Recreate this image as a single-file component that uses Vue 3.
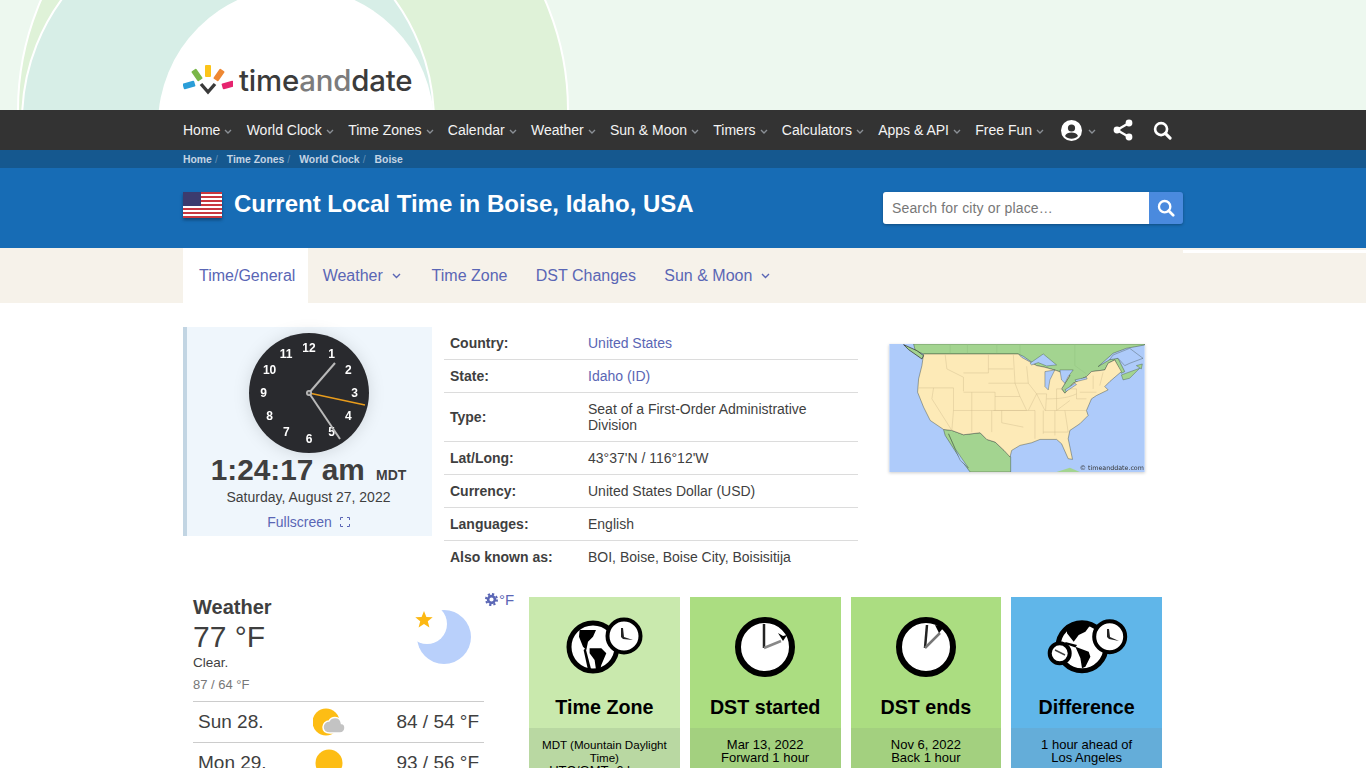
<template>
  <div class="page">
    <header class="top">
      <svg class="backdrop" width="1366" height="110" viewBox="0 0 1366 110">
        <circle cx="293" cy="110" r="275" fill="#dff2d8" stroke="#fff" stroke-width="2" />
        <circle cx="228" cy="121" r="206" fill="#d7eee7" stroke="#fff" stroke-width="2" />
        <circle cx="296" cy="125" r="138" fill="#fff" />
      </svg>
      <div class="wrap logo">
        <svg width="50" height="32" viewBox="0 0 50 32">
          <rect x="0" y="18" width="12" height="6" rx="1" fill="#2b9ed8" transform="rotate(-16 6 21)" />
          <rect x="11" y="5" width="6" height="12" rx="1" fill="#7ab648" transform="rotate(-35 14 11)" />
          <rect x="22" y="1" width="6" height="12" rx="1" fill="#fcc419" />
          <rect x="33" y="5" width="6" height="12" rx="1" fill="#ee8833" transform="rotate(35 36 11)" />
          <rect x="39" y="18" width="12" height="6" rx="1" fill="#e6246f" transform="rotate(-16 45 21)" />
          <path d="M18 20l7 8 7-8" fill="none" stroke="#3a3a3a" stroke-width="3.4" />
        </svg>
        <span class="logo-text">time<span class="and">and</span>date</span>
      </div>
    </header>

    <nav class="nav">
      <div class="wrap nav-row">
        <a v-for="item in navItems" :key="item" class="nav-item">
          {{ item }}
          <svg class="chev" width="8" height="5" viewBox="0 0 8 5"><path d="M1 1l3 3 3-3" fill="none" stroke="#8b9096" stroke-width="1.4" /></svg>
        </a>
        <a class="nav-item user">
          <svg width="21" height="21" viewBox="0 0 21 21">
            <circle cx="10.5" cy="10.5" r="10.5" fill="#fff" />
            <circle cx="10.5" cy="8" r="3.6" fill="#333" />
            <path d="M4 16c1.2-3 3.600-3.600 6.500-3.600s5.300.6 6.500 3.600c-1.700 1.800-3.900 2.800-6.500 2.800S5.700 17.800 4 16z" fill="#333" />
          </svg>
          <svg class="chev" width="8" height="5" viewBox="0 0 8 5"><path d="M1 1l3 3 3-3" fill="none" stroke="#8b9096" stroke-width="1.4" /></svg>
        </a>
        <svg class="share" width="22" height="22" viewBox="0 0 22 22">
          <path d="M17 4L5 11l12 7" fill="none" stroke="#fff" stroke-width="2.400" />
          <circle cx="17" cy="4" r="3.400" fill="#fff" />
          <circle cx="5" cy="11" r="3.400" fill="#fff" />
          <circle cx="17" cy="18" r="3.400" fill="#fff" />
        </svg>
        <svg class="nav-search" width="19" height="19" viewBox="0 0 20 20">
          <circle cx="8.500" cy="8.500" r="6.300" fill="none" stroke="#fff" stroke-width="2.800" />
          <path d="M13 13l5 5" stroke="#fff" stroke-width="3.200" stroke-linecap="round" />
        </svg>
      </div>
    </nav>

    <div class="crumbs">
      <div class="wrap crumb-row">
        <span v-for="(c, i) in crumbs" :key="c" class="crumb">{{ c }}<i v-if="i < crumbs.length - 1">/</i></span>
      </div>
    </div>

    <section class="banner">
      <div class="wrap banner-row">
        <svg class="flag" width="39" height="26" viewBox="0 0 39 26">
          <rect width="39" height="26" fill="#fff" />
          <rect v-for="n in 7" :key="n" x="0" :y="(n - 1) * 4" width="39" height="2" fill="#c8373f" />
          <rect width="18" height="14" fill="#3c3b6e" />
        </svg>
        <h1>Current Local Time in Boise, Idaho, USA</h1>
        <div class="search">
          <input type="text" placeholder="Search for city or place…" />
          <button>
            <svg width="18" height="18" viewBox="0 0 20 20">
              <circle cx="8.500" cy="8.500" r="6.300" fill="none" stroke="#fff" stroke-width="2.600" />
              <path d="M13 13l5 5" stroke="#fff" stroke-width="3" stroke-linecap="round" />
            </svg>
          </button>
        </div>
      </div>
    </section>

    <div class="tabs">
      <div class="wrap tab-row">
        <a v-for="tab in tabs" :key="tab.label" class="tab" :class="{ active: tab.active }">
          {{ tab.label }}
          <svg v-if="tab.menu" class="tab-chev" width="9" height="6" viewBox="0 0 9 6"><path d="M1 1l3.500 3.500L8 1" fill="none" stroke="#5a66b5" stroke-width="1.400" /></svg>
        </a>
      </div>
      <div class="strip"></div>
    </div>

    <main class="wrap">
      <div class="info-row">
        <div class="clock-box">
          <svg class="clock" width="120" height="120" viewBox="-60 -60 120 120">
            <circle r="60" fill="#292a2e" />
            <text v-for="n in 12" :key="n" class="num" :x="numX(n)" :y="numY(n)" text-anchor="middle" dominant-baseline="central">{{ n }}</text>
            <path d="M0 0L26 -30" stroke="#b9b9b9" stroke-width="2" />
            <path d="M0 0L31 46" stroke="#b9b9b9" stroke-width="2" />
            <path d="M0 0L56 12" stroke="#e89c1c" stroke-width="1.300" />
            <circle r="3" fill="#b9b9b9" />
            <circle r="1.300" fill="#555" />
          </svg>
          <div class="time">1:24:17 am <span>MDT</span></div>
          <div class="date">Saturday, August 27, 2022</div>
          <a class="fullscreen">Fullscreen
            <svg width="10" height="10" viewBox="0 0 10 10"><path d="M.5 3V.5H3M7 .5h2.500V3M9.500 7v2.500H7M3 9.500H.5V7" fill="none" stroke="#5a66b5" /></svg>
          </a>
        </div>

        <table class="facts">
          <tbody>
            <tr v-for="row in facts" :key="row.label">
              <th>{{ row.label }}</th>
              <td :class="{ link: row.link }">{{ row.value }}</td>
            </tr>
          </tbody>
        </table>

        <svg class="map" width="256" height="128" viewBox="27 25 768 385">
          <rect x="27" y="25" width="768" height="385" fill="#aecbfa" />
          <!-- Canada -->
          <path d="M100 25H795V28L740 38 700 53 655 93 690 72 715 68 735 108 725 113 705 73 685 83 675 103 635 108 620 123 580 143 555 173 545 160 570 120 530 105 495 95 470 90 430 62 415 55H130L105 45Z" fill="#a3d490" stroke="#2d3b2d" stroke-width="1.200" />
          <path d="M210 25V55M262 25V55M350 25V55M420 25V62M585 25V90L620 115" fill="none" stroke="#8fc07f" stroke-width="1.200" />
          <path d="M725 118L780 98 750 128 730 133Z" fill="#a3d490" stroke="#2d3b2d" stroke-width="1" />
          <path d="M770 90L788 85 785 100Z" fill="#a3d490" stroke="#2d3b2d" stroke-width="1" />
          <!-- Mexico and Cuba -->
          <path d="M190 282L215 285 250 298 300 292 320 312 345 320 372 345 392 365 392 410H270L240 370 195 300Z" fill="#a3d490" stroke="#2d3b2d" stroke-width="1.200" />
          <path d="M530 410L570 397 600 410Z" fill="#a3d490" />
          <!-- USA -->
          <path d="M130 55H415L425 65 470 90 495 95 530 105 570 120 545 160 555 173 580 143 620 123 635 108 675 103 685 83 705 73 725 108 690 138 675 153 685 163 650 180 635 190 620 225 625 240 600 265 570 285 565 310 578 372 565 370 545 325 530 312 480 312 455 322 420 330 395 345 390 365 372 345 345 320 320 312 300 292 250 298 215 285 190 282 150 255 130 215 112 170 115 130 125 90Z" fill="#fdeab7" stroke="#2d3b2d" stroke-width="1.200" />
          <g fill="none" stroke="#cdb98a" stroke-width="1.200">
            <path d="M115 157H160L155 190 215 285" />
            <path d="M195 57L200 100 250 125V167" />
            <path d="M160 157H220V225L215 285M220 225H345V170H250" />
            <path d="M275 170V225M275 225V290M335 225V290" />
            <path d="M250 112H325V57M325 100H400M325 143H420M345 183H420L440 225H345" />
            <path d="M400 57L405 143 420 183M340 225H465V310M365 225V262L430 275" />
            <path d="M440 92L445 143 420 143M445 143L470 175 445 225M470 175L495 225H620" />
            <path d="M470 175H500L497 225M530 160V225M530 160H590V190L620 190" />
            <path d="M490 225V295M525 225V300M555 225L565 290H490M570 195L530 225" />
            <path d="M600 170H650M640 120V160M670 110L660 150" />
            <path d="M500 190C520 190 560 190 590 175" />
          </g>
          <!-- Great Lakes and the Gulf of St Lawrence -->
          <g fill="#aecbfa" stroke="#2d3b2d" stroke-width="1">
            <path d="M450 83L490 55 530 88 500 91 475 81 455 88Z" />
            <path d="M495 108L525 103 510 133 505 163 495 153Z" />
            <path d="M540 103H580L565 123 555 143 545 133Z" />
            <path d="M555 163L585 143 590 147 560 167Z" />
            <path d="M585 133L620 125 622 130 590 138Z" />
            <path d="M700 58L750 38 790 68 750 83 735 90 715 68 690 72Z" />
          </g>
          <path d="M205 295L240 375 265 398 225 340Z" fill="#aecbfa" stroke="#2d3b2d" stroke-width="1" />
          <path d="M70 27L110 45 130 60 125 70 85 42Z" fill="#a3d490" stroke="#222" stroke-width="2" />
          <text x="600" y="405" class="map-note">© timeanddate.com</text>
        </svg>
      </div>

      <div class="lower">
        <div class="weather">
          <div class="wx-now">
            <div>
              <div class="wx-title">Weather</div>
              <div class="wx-temp">77 °F</div>
              <div class="wx-desc">Clear.</div>
              <div class="wx-range">87 / 64 °F</div>
            </div>
            <svg class="moon" width="60" height="64" viewBox="0 0 60 64">
              <circle cx="33" cy="37" r="27" fill="#b9d0fb" />
              <circle cx="16" cy="24" r="20" fill="#fff" />
              <path d="M13 11l2.400 5.900 6.300.4-4.900 4 1.600 6.200L13 24.100l-5.400 3.400 1.600-6.200-4.900-4 6.300-.4z" fill="#fcb813" />
            </svg>
            <a class="unit">
              <svg width="13" height="13" viewBox="0 0 13 13">
                <circle cx="6.500" cy="6.500" r="3.400" fill="none" stroke="#5a66b5" stroke-width="2.600" />
                <circle cx="6.500" cy="6.500" r="5.500" fill="none" stroke="#5a66b5" stroke-width="2" stroke-dasharray="2.200 2.100" />
              </svg>°F
            </a>
          </div>
          <div v-for="day in forecast" :key="day.name" class="fc-row">
            <span class="fc-day">{{ day.name }}</span>
            <svg class="fc-icon" width="34" height="28" viewBox="0 0 34 28">
              <circle :cx="day.cloudy ? 13 : 16" cy="14" r="13.500" fill="#fdbd14" />
              <path v-if="day.cloudy" d="M17 25c-4 0-7-2-7-6 0-3.500 3-6 6-6 1-2 3.500-3.500 6-3.500 3.500 0 6 2.500 6.500 6 2.500 0 3.500 2 3.500 4.500s-2 5-5 5z" fill="#c3c3c3" stroke="#fff" stroke-width="1.500" />
            </svg>
            <span class="fc-temp">{{ day.temps }}</span>
          </div>
        </div>

        <div class="cards">
          <div v-for="card in cards" :key="card.title" class="card" :class="card.tone">
            <div class="card-top">
              <svg class="card-icon" width="90" height="66" viewBox="0 0 90 66">
                <g v-if="card.icon === 'zone'">
                  <circle cx="34" cy="33" r="24" fill="#fff" stroke="#000" stroke-width="5" />
                  <path d="M20.600 16H37L34 22.700 29 27.700 27.300 36 24 32.700 20 22.700Z" fill="#000" />
                  <path d="M26.600 34.300L32.300 56H29L24.600 36Z" fill="#000" />
                  <path d="M30.600 34.300H42.300L47.300 39.300 42.300 51 40.600 57.700H37.300L35.600 46 30.600 39.300Z" fill="#000" />
                  <circle cx="65" cy="22" r="16.500" fill="#fff" stroke="#000" stroke-width="4" />
                  <path d="M62 14H64L65 23 74 26 64 25 62 23Z" fill="#222" />
                </g>
                <g v-else-if="card.icon === 'start'">
                  <circle cx="45" cy="33" r="27" fill="#fff" stroke="#000" stroke-width="6" />
                  <path d="M44 10v24" stroke="#222" stroke-width="2.500" />
                  <path d="M44 34l17-7" stroke="#888" stroke-width="2.500" />
                  <path d="M58 19l5 8 4-6-4 1z" fill="#000" />
                </g>
                <g v-else-if="card.icon === 'end'">
                  <circle cx="45" cy="33" r="27" fill="#fff" stroke="#000" stroke-width="6" />
                  <path d="M44 34l2-23" stroke="#222" stroke-width="2.500" />
                  <path d="M44 34l15-15" stroke="#777" stroke-width="2.500" />
                  <path d="M54 11l9 2-5 6z" fill="#000" />
                </g>
                <g v-else>
                  <circle cx="40" cy="32.700" r="24" fill="#fff" stroke="#000" stroke-width="5" />
                  <path d="M25 11H48.400L43.400 17.700 36.700 21 31.700 27.700 25 19.300Z" fill="#000" />
                  <path d="M23.400 28L35 31 33.400 33.500 23.400 30Z" fill="#000" />
                  <path d="M33.400 32.700L46.700 37.700 48.400 42.700 43.400 52.700 40 54.300 38.400 44.300Z" fill="#000" />
                  <circle cx="67.700" cy="22.700" r="15.500" fill="#fff" stroke="#000" stroke-width="4" />
                  <path d="M65 15H67L68 23 77 27 67 25 65 23Z" fill="#222" />
                  <circle cx="17.700" cy="39.300" r="10" fill="#fff" stroke="#000" stroke-width="4" />
                  <path d="M13 36L18 38.500 23 41" fill="none" stroke="#444" stroke-width="1.500" />
                </g>
              </svg>
              <h3>{{ card.title }}</h3>
            </div>
            <div class="card-body">
              <div v-for="(line, i) in card.lines" :key="line" :class="{ small: card.small && i === 0 }">{{ line }}</div>
            </div>
          </div>
        </div>
      </div>
    </main>
  </div>
</template>

<script setup>
const navItems = ['Home', 'World Clock', 'Time Zones', 'Calendar', 'Weather', 'Sun & Moon', 'Timers', 'Calculators', 'Apps & API', 'Free Fun']
const crumbs = ['Home', 'Time Zones', 'World Clock', 'Boise']

const tabs = [
  { label: 'Time/General', active: true },
  { label: 'Weather', menu: true },
  { label: 'Time Zone' },
  { label: 'DST Changes' },
  { label: 'Sun & Moon', menu: true }
]

const facts = [
  { label: 'Country:', value: 'United States', link: true },
  { label: 'State:', value: 'Idaho (ID)', link: true },
  { label: 'Type:', value: 'Seat of a First-Order Administrative Division' },
  { label: 'Lat/Long:', value: '43°37\'N / 116°12\'W' },
  { label: 'Currency:', value: 'United States Dollar (USD)' },
  { label: 'Languages:', value: 'English' },
  { label: 'Also known as:', value: 'BOI, Boise, Boise City, Boisisitija' }
]

const forecast = [
  { name: 'Sun 28.', temps: '84 / 54 °F', cloudy: true },
  { name: 'Mon 29.', temps: '93 / 56 °F', cloudy: false }
]

const cards = [
  { title: 'Time Zone', icon: 'zone', tone: 'pale', small: true, lines: ['MDT (Mountain Daylight Time)', 'UTC/GMT -6 hours'] },
  { title: 'DST started', icon: 'start', tone: 'green', lines: ['Mar 13, 2022', 'Forward 1 hour'] },
  { title: 'DST ends', icon: 'end', tone: 'green', lines: ['Nov 6, 2022', 'Back 1 hour'] },
  { title: 'Difference', icon: 'diff', tone: 'blue', lines: ['1 hour ahead of', 'Los Angeles'] }
]

const numX = (n) => (45.5 * Math.sin((n * Math.PI) / 6)).toFixed(1)
const numY = (n) => (-45.5 * Math.cos((n * Math.PI) / 6)).toFixed(1)
</script>

<style>
html, body {
  margin: 0;
  background: #fff;
  overflow: hidden;
}
</style>

<style scoped>
.page {
  height: 768px;
  overflow: hidden;
  font-family: "Liberation Sans", Arial, sans-serif;
  color: #3f3f3f;
  font-size: 14px;
}

.wrap {
  width: 1000px;
  margin: 0 auto;
}

.top {
  height: 110px;
  background: #edf8ef;
  position: relative;
  overflow: hidden;
}

.backdrop {
  position: absolute;
  left: 0;
  top: 0;
}

.logo {
  position: relative;
  display: flex;
  align-items: center;
  gap: 6px;
  height: 110px;
  padding-top: 50px;
  box-sizing: border-box;
}

.logo-text {
  font-family: Inter, "Liberation Sans", sans-serif;
  font-size: 29.400px;
  font-weight: 500;
  letter-spacing: -0.2px;
  color: #3b3b3b;
}

.and {
  color: #7c7c7c;
}

.nav {
  height: 40px;
  background: #333;
}

.nav-row {
  display: flex;
  align-items: center;
  height: 40px;
  gap: 14.300px;
}

.nav-item {
  display: flex;
  align-items: center;
  gap: 4px;
  color: #f4f4f4;
  white-space: nowrap;
}

.user {
  margin-left: 3px;
  gap: 6px;
}

.share {
  margin-left: 1.500px;
}

.nav-search {
  margin-left: 4px;
}

.chev {
  margin-top: 2px;
}

.crumbs {
  height: 18px;
  background: #15588f;
}

.crumb-row {
  display: flex;
  height: 18px;
  align-items: center;
  gap: 9px;
  font-size: 10.400px;
  font-weight: bold;
  color: #c4d4e4;
}

.crumb i {
  font-style: normal;
  font-weight: normal;
  color: #5f8db5;
  margin-left: 3px;
}

.banner {
  height: 80px;
  background: #176cb5;
}

.banner-row {
  display: flex;
  align-items: flex-start;
  padding-top: 24px;
}

.flag {
  box-shadow: 0 2px 3px rgba(0, 0, 0, 0.35);
}

h1 {
  margin: -3px 0 0 12px;
  font-size: 24px;
  line-height: 30px;
  color: #fff;
  flex: 1;
}

.search {
  display: flex;
  box-shadow: 0 1px 3px rgba(0, 0, 0, 0.3);
  border-radius: 3px;
}

.search input {
  width: 266px;
  height: 32px;
  box-sizing: border-box;
  border: 0;
  border-radius: 3px 0 0 3px;
  padding: 0 9px;
  font: 14px "Liberation Sans", Arial, sans-serif;
  letter-spacing: 0.15px;
  background: #fff;
  outline: none;
}

.search input::placeholder {
  color: #777;
}

.search button {
  width: 34px;
  height: 32px;
  border: 0;
  padding: 0;
  background: #4a8ade;
  border-radius: 0 3px 3px 0;
  display: flex;
  align-items: center;
  justify-content: center;
}

.tabs {
  height: 55px;
  background: #f6f2ea;
  position: relative;
}

.strip {
  position: absolute;
  left: 1183px;
  right: 0;
  top: 2px;
  height: 3px;
  background: #fff;
}

.tab-row {
  display: flex;
  height: 55px;
}

.tab {
  display: flex;
  align-items: center;
  gap: 7px;
  padding: 0 14px;
  font-size: 16px;
  color: #5a66b5;
  white-space: nowrap;
}

.tab.active {
  background: #fff;
  padding: 0 13px 0 16px;
}

.tab + .tab {
  margin-left: 0.300px;
}

.tab-chev {
  margin: 0 2.500px 0 2px;
}

.info-row {
  display: flex;
  align-items: flex-start;
  padding-top: 24px;
}

.clock-box {
  width: 249px;
  height: 209px;
  box-sizing: border-box;
  background: #eff6fc;
  border-left: 4px solid #c2d5e3;
  text-align: center;
  padding-top: 6px;
  padding-right: 2px;
}

.clock {
  display: block;
  margin: 0 auto;
  filter: drop-shadow(0 1px 8px rgba(0, 0, 0, 0.12));
}

.num {
  fill: #fff;
  font-size: 12px;
  font-weight: bold;
}

.time {
  font-size: 29.800px;
  font-weight: bold;
  line-height: 36px;
  margin-top: -1px;
  white-space: nowrap;
}

.time span {
  font-size: 14px;
  margin-left: 3px;
}

.date {
  line-height: 20px;
  margin-top: -6px;
}

.fullscreen {
  display: block;
  margin-top: 5px;
  line-height: 20px;
  color: #5a66b5;
}

.fullscreen svg {
  margin-left: 4px;
}

.facts {
  width: 414px;
  margin-left: 12px;
  border-collapse: collapse;
  line-height: 16px;
}

.facts tr {
  border-bottom: 1px solid #dcdcdc;
}

.facts tr:last-child {
  border-bottom: 0;
}

.facts th,
.facts td {
  padding: 8px 6px 8px 6px;
  text-align: left;
  vertical-align: middle;
}

.facts th {
  width: 126px;
  font-weight: bold;
}

.link {
  color: #5a66b5;
}

.map {
  margin: 17px 0 0 31px;
  box-shadow: 0 1px 3px rgba(0, 0, 0, 0.2);
  filter: blur(0.35px);
}

.map-note {
  font: 19px "DejaVu Sans", sans-serif;
  fill: #333;
}

.lower {
  display: flex;
  margin-top: 24px;
}

.weather {
  width: 331px;
  flex: none;
  padding-left: 10px;
  box-sizing: border-box;
}

.wx-now {
  position: relative;
  display: flex;
  justify-content: space-between;
  height: 104px;
  border-bottom: 1px solid #ccc;
  width: 291px;
}

.wx-title {
  font-size: 20px;
  font-weight: bold;
  line-height: 20px;
}

.wx-temp {
  font-size: 30px;
  line-height: 37px;
  margin-top: 1px;
}

.wx-desc {
  font-size: 13.500px;
  line-height: 16px;
}

.wx-range {
  font-size: 13px;
  line-height: 20px;
  margin-top: 4px;
  color: #777;
}

.moon {
  position: absolute;
  left: 218px;
  top: 3px;
}

.unit {
  position: absolute;
  left: 292px;
  top: -6px;
  color: #5a66b5;
  font-size: 15px;
  white-space: nowrap;
  display: flex;
  align-items: center;
  gap: 1px;
}

.fc-row {
  display: flex;
  align-items: center;
  width: 281px;
  height: 40px;
  border-bottom: 1px solid #ccc;
  font-size: 19px;
  padding: 0 5px;
}

.fc-day {
  width: 115px;
}

.fc-icon {
  flex: none;
}

.fc-temp {
  margin-left: auto;
}

.cards {
  display: flex;
  gap: 10px;
  margin-left: 15px;
}

.card {
  width: 150.750px;
  height: 220px;
  text-align: center;
  color: #000;
  font-size: 13px;
}

.card-top {
  height: 131px;
  box-sizing: border-box;
  padding-top: 17px;
}

.card-icon {
  display: block;
  margin: 0 auto;
}

h3 {
  margin: 15px 0 0;
  font-size: 19.700px;
  line-height: 24px;
}

.card-body {
  padding: 10px 8px;
  line-height: 13px;
}

.small {
  font-size: 11.600px;
}

.pale .card-top { background: #c9e9ad; }
.pale .card-body { background: #b9d8a2; }
.green .card-top { background: #abdd81; }
.green .card-body { background: #a3d07f; }
.blue .card-top { background: #60b6e9; }
.blue .card-body { background: #64add9; }
</style>
